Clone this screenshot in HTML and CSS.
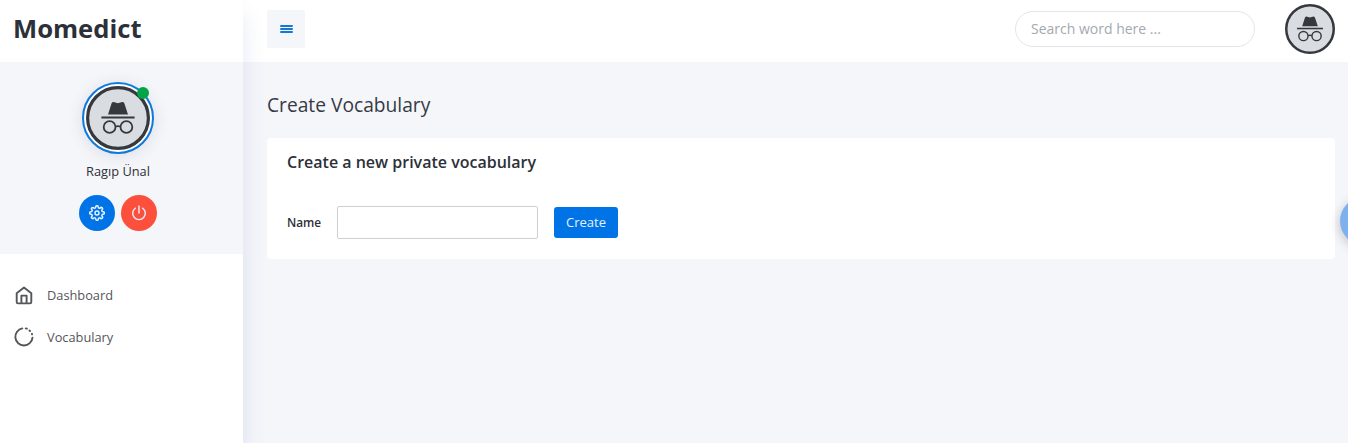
FILE: index.html
```html
<!DOCTYPE html>
<html lang="en">
<head>
<meta charset="utf-8">
<title>Momedict</title>
<link rel="stylesheet" href="styles.css">
</head>
<body>
<svg class="defs" aria-hidden="true">
  <symbol id="incognito" viewBox="0 0 64 64">
    <circle cx="32" cy="32" r="30.4" fill="#d9dce1" stroke="#35383d" stroke-width="3.2"/>
    <path d="M22 28.5 25.5 17.5Q26.5 15.5 28.5 16.3L31.8 17.3 35.2 16.3Q37.5 15.5 38.4 17.5L42 28.5Z" fill="#35383d"/>
    <path d="M15.4 31.4h33.2" stroke="#35383d" stroke-width="2"/>
    <g fill="none" stroke="#35383d" stroke-width="1.8"><circle cx="23.6" cy="41" r="5.9"/><circle cx="40.4" cy="41" r="5.9"/><path d="M29.5 40.5q2.5-.9 5 0"/></g>
  </symbol>
</svg>
<div class="app">
  <aside class="sidebar">
    <div class="brand">Momedict</div>
    <section class="profile">
      <div class="portrait"><svg class="face"><use href="#incognito"/></svg><span class="status"></span></div>
      <div class="user">Ragıp Ünal</div>
      <div class="actions">
        <button class="round settings" aria-label="Settings"><svg viewBox="0 0 24 24" width="16" height="16"><circle cx="12" cy="12" r="3"/><path d="M19.4 15a1.65 1.65 0 0 0 .33 1.82l.06.06a2 2 0 0 1-2.83 2.83l-.06-.06a1.65 1.65 0 0 0-2.8 1.17V21a2 2 0 0 1-4 0v-.09a1.65 1.65 0 0 0-2.9-1.26l-.06.06a2 2 0 0 1-2.83-2.83l.06-.06A1.65 1.65 0 0 0 3.09 14H3a2 2 0 0 1 0-4h.09a1.65 1.65 0 0 0 1.26-2.82l-.06-.06a2 2 0 0 1 2.83-2.83l.06.06A1.65 1.65 0 0 0 10 3.09V3a2 2 0 0 1 4 0v.09a1.65 1.65 0 0 0 2.82 1.26l.06-.06a2 2 0 0 1 2.83 2.83l-.06.06A1.65 1.65 0 0 0 20.91 10H21a2 2 0 0 1 0 4h-.09a1.65 1.65 0 0 0-1.51 1z"/></svg></button>
        <button class="round power" aria-label="Sign out"><svg viewBox="0 0 18 18" width="18" height="18"><path d="M9 2v7M5.3 4.2a6.3 6.3 0 1 0 7.4 0"/></svg></button>
      </div>
    </section>
    <nav class="menu">
      <a class="item"><svg viewBox="0 0 20 20" width="20" height="20"><path d="M2.7 8.2 10 2.6l7.3 5.6v8.9q0 1.3-1.3 1.3H4q-1.3 0-1.3-1.3zM7.4 18.2V10.6h5.2v7.6"/></svg>Dashboard</a>
      <a class="item"><svg viewBox="0 0 20 20" width="20" height="20"><path d="M8.3 1.4A8.6 8.6 0 1 0 18.5 10.6"/><path d="M11.8 1.4 12.9 1.7M15.5 3.5 16 4M17.9 6.8 18.1 7.3"/></svg>Vocabulary</a>
    </nav>
  </aside>
  <div class="page">
    <header class="topbar">
      <button class="toggle" aria-label="Toggle menu"><span></span><span></span><span></span></button>
      <input class="search" type="text" placeholder="Search word here ...">
      <svg class="account"><use href="#incognito"/></svg>
    </header>
    <main class="content">
      <h1 class="title">Create Vocabulary</h1>
      <section class="card">
        <h2 class="card-title">Create a new private vocabulary</h2>
        <form class="form">
          <label class="label" for="name">Name</label>
          <input class="field" id="name" type="text">
          <button class="submit" type="button">Create</button>
        </form>
      </section>
    </main>
  </div>
</div>
<span class="bubble"></span>
</body>
</html>
```
FILE: styles.css
```css
* { box-sizing: border-box; }
body { margin: 0; overflow: hidden; background: #f5f6fa; color: #2c3038; font-family: "Open Sans", sans-serif; font-size: 12.8px; }
button, input { font: inherit; margin: 0; }
button { border: 0; padding: 0; }
.defs { position: absolute; width: 0; height: 0; }
.app { display: flex; height: 443px; }
.sidebar { width: 243px; flex: none; background: #fff; box-shadow: 1px 16px 20px 0 rgba(70, 90, 170, .13); z-index: 1; }
.brand { height: 62px; padding: 11px 13px; font-size: 25.6px; line-height: 36px; font-weight: 700; color: #2c3038; }
.profile { height: 192px; background: #f5f6fa; padding: 20px 7px 0 0; display: flex; flex-direction: column; align-items: center; }
.portrait { position: relative; width: 72px; height: 72px; padding: 2px; border: 2px solid #0d79dd; border-radius: 50%; background: #fff; box-shadow: 0 2px 16px rgba(60, 70, 90, .14); }
.face { display: block; width: 64px; height: 64px; }
.status { position: absolute; left: 53px; top: 3px; width: 12px; height: 12px; border-radius: 50%; background: #02a546; }
.user { margin-top: 8px; line-height: 18px; }
.actions { display: flex; gap: 6px; margin-top: 15px; }
.round { display: flex; align-items: center; justify-content: center; width: 36px; height: 36px; border-radius: 50%; color: #e8f2ff; }
.round svg { fill: none; stroke: currentColor; stroke-width: 1.4; stroke-linecap: round; stroke-linejoin: round; }
.round.settings svg { stroke-width: 2.2; }
.settings { background: #0073e6; }
.power { background: #fd503c; }
.menu { padding: 20px 14px; }
.item { display: flex; align-items: center; gap: 13px; height: 42px; color: #54565a; }
.item svg { fill: none; stroke: #54565a; stroke-width: 1.9; stroke-linecap: round; stroke-linejoin: round; }
.page { flex: 1; min-width: 0; }
.topbar { display: flex; height: 62px; padding: 0 13px 4px 24px; align-items: center; background: #fff; }
.toggle { display: flex; flex-direction: column; align-items: center; padding-top: 15px; gap: 1px; width: 38px; height: 38px; border-radius: 2px; background: #f5f6fa; }
.toggle span { width: 13px; height: 2px; border-radius: 1px; background: #1478d4; }
.search { width: 240px; height: 36px; margin-left: auto; padding: 0 15px 1px; border: 1px solid #e4e5e9; border-radius: 18px; background: #fff; font-size: 14px; outline: 0; }
.search::placeholder { color: #a4a9b1; opacity: 1; }
.account { width: 50px; height: 50px; margin-left: 30px; }
.content { padding: 29px 13px 0 24px; }
.title { margin: 0; font-size: 19.2px; line-height: 28px; font-weight: 400; color: #353a44; }
.card { height: 121px; margin-top: 19px; padding: 12px 20px; border-radius: 4px; background: #fff; }
.card-title { margin: 0; font-size: 16px; line-height: 24px; font-weight: 600; }
.form { display: flex; align-items: center; height: 33px; margin-top: 32px; }
.label { width: 50px; padding-bottom: 2px; font-size: 11.8px; font-weight: 600; }
.field { width: 201px; height: 33px; border: 1px solid #cdcfd2; border-radius: 2px; background: #fff; }
.submit { width: 64px; height: 31px; margin-left: 16px; padding-bottom: 1px; border-radius: 3px; background: #0073e6; color: #e4f1ff; font-size: 13px; }
.bubble { position: fixed; left: 1340px; top: 197px; width: 48px; height: 48px; border-radius: 50%; background: #7eb0f0; box-shadow: 0 3px 12px rgba(0, 0, 0, .22); }
```
